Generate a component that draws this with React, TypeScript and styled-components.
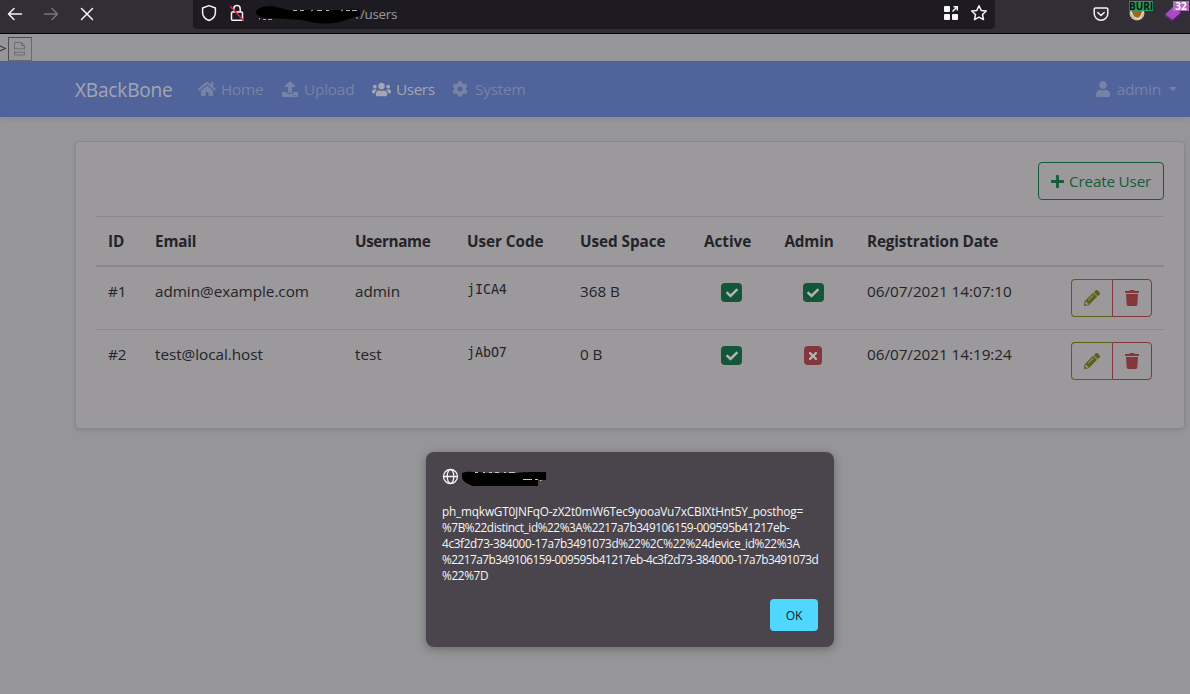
import React from 'react';
import styled, { createGlobalStyle } from 'styled-components';
import { FaHome, FaUpload, FaUsers, FaCog, FaUser, FaPlus, FaPencilAlt, FaTrash, FaCheck, FaTimes } from 'react-icons/fa';

const GlobalStyle = createGlobalStyle`
  * { box-sizing: border-box; }
  body {
    margin: 0;
    background: #969698;
    color: #242428;
    font-family: "Open Sans", "Noto Sans", sans-serif;
    font-size: 15.3px;
    line-height: 24px;
    overflow: hidden;
  }
  svg { display: block; flex: none; }
`;

const Page = styled.div`
  position: relative;
  width: 1190px;
  height: 694px;
  overflow: hidden;
  display: flex;
  flex-direction: column;
`;

const Toolbar = styled.header`
  height: 34px;
  flex: none;
  display: flex;
  align-items: flex-start;
  background: #322e35;
  border-bottom: 1px solid #050506;
`;

const NavButtons = styled.div`
  width: 193px;
  height: 27px;
  padding-left: 7px;
  display: flex;
  align-items: center;
  gap: 20px;
`;

const AddressBar = styled.div`
  width: 802px;
  height: 29px;
  padding: 0 7px 3px 8px;
  display: flex;
  align-items: center;
  background: #1d1b21;
  border-radius: 0 0 4px 4px;
`;

const UrlPath = styled.span`
  color: #9b9a9f;
  font-size: 13.4px;
  line-height: 20px;
  letter-spacing: -0.3px;
  padding-top: 1px;
  margin-right: auto;
`;

const Extensions = styled.div`
  height: 27px;
  padding-left: 98px;
  display: flex;
  align-items: center;
`;

const Extension = styled.div<{ $gap: number }>`
  position: relative;
  margin-left: ${p => p.$gap}px;
`;

const ExtensionBadge = styled.span<{ $bg: string; $ink: string; $left: number; $width: number }>`
  position: absolute;
  left: ${p => p.$left}px;
  top: -5px;
  width: ${p => p.$width}px;
  height: 10px;
  display: flex;
  align-items: center;
  justify-content: center;
  white-space: nowrap;
  background: ${p => p.$bg};
  color: ${p => p.$ink};
  font: 700 10px/10px "Open Sans", sans-serif;
`;

const InjectedStrip = styled.div`
  height: 27px;
  flex: none;
  display: flex;
  align-items: flex-start;
  padding-top: 3px;
`;

const StrayText = styled.span`
  width: 9px;
  margin-left: -1px;
  font-size: 13px;
  line-height: 22px;
`;

const BrokenImage = styled.div`
  width: 24px;
  height: 24px;
  border: 1px solid;
  border-color: #4d4d51 #6b6b6f #6b6b6f #4d4d51;
  display: grid;
  place-items: center;
`;

const Navbar = styled.nav`
  height: 56px;
  flex: none;
  padding: 0 13px 0 75px;
  display: flex;
  align-items: center;
  background: #50639b;
  box-shadow: 0 2px 4px rgba(0, 0, 0, 0.07);
`;

const Brand = styled.span`
  width: 123px;
  padding-top: 1px;
  font-size: 19.1px;
  letter-spacing: -0.2px;
  color: #a4a6b1;
`;

const NavLink = styled.a<{ $active?: boolean; $width?: number; $gap?: number }>`
  width: ${p => (p.$width ? `${p.$width}px` : 'auto')};
  display: flex;
  align-items: center;
  gap: ${p => p.$gap ?? 5}px;
  white-space: nowrap;
  letter-spacing: ${p => (p.$active ? -0.4 : -0.18)}px;
  color: ${p => (p.$active ? '#a4a6b1' : '#7682a6')};
`;

const Account = styled(NavLink)`
  margin-left: auto;
  gap: 6px;
`;

const Caret = styled.i`
  margin-left: 2px;
  border: 4px solid transparent;
  border-top-color: currentColor;
  border-bottom: 0;
`;

const Card = styled.main`
  width: 1110px;
  height: 288px;
  margin: 24px 0 0 75px;
  padding: 20px;
  border: 1px solid #88878a;
  border-radius: 4px;
  background: #9b999c;
  box-shadow: 0 2px 4px rgba(0, 0, 0, 0.09);
`;

const CardActions = styled.div`
  display: flex;
  justify-content: flex-end;
  margin-bottom: 16px;
`;

const CreateButton = styled.button`
  width: 126px;
  height: 38px;
  padding: 0 0 0 11px;
  display: flex;
  align-items: center;
  gap: 4px;
  border: 1px solid #165b3c;
  border-radius: 4px;
  background: none;
  color: #165b3c;
  font: inherit;
  letter-spacing: -0.2px;
  white-space: nowrap;
`;

const Row = styled.div<{ $head?: boolean }>`
  display: grid;
  grid-template-columns: 47px 200px 112px 113px 124px 79px 84px 204px 105px;
  height: ${p => (p.$head ? 50 : 63)}px;
  border-top: 1px solid #88868a;
  letter-spacing: -0.05px;
  ${p => p.$head && 'border-bottom: 1px solid #88868a; font-weight: 700; letter-spacing: -0.16px;'}
`;

const Cell = styled.div<{ $track?: number }>`
  padding: 12px 0 0 12px;
  white-space: nowrap;
  ${p => p.$track !== undefined && `letter-spacing: ${p.$track}px;`}
`;

const Code = styled.code`
  display: block;
  margin-top: -1px;
  font: 13.4px/24px "DejaVu Sans Mono", monospace;
  letter-spacing: -0.1px;
`;

const BadgeCell = styled.div`
  display: flex;
  justify-content: center;
  padding-top: 16px;
`;

const Badge = styled.span<{ $on: boolean }>`
  width: ${p => (p.$on ? 21 : 18)}px;
  height: 19px;
  display: grid;
  place-items: center;
  border-radius: 4px;
  color: #b5b5b5;
  background: ${p => (p.$on ? '#135738' : '#84373a')};
`;

const ButtonGroup = styled.div`
  display: flex;
  padding: 12px;
`;

const IconButton = styled.button<{ $danger?: boolean }>`
  width: ${p => (p.$danger ? 40 : 41)}px;
  height: 38px;
  padding: 0;
  display: grid;
  place-items: center;
  background: none;
  border: 1px solid ${p => (p.$danger ? '#84373a' : '#5b6218')};
  border-right-width: ${p => (p.$danger ? 1 : 0)}px;
  border-radius: ${p => (p.$danger ? '0 4px 4px 0' : '4px 0 0 4px')};
  color: ${p => (p.$danger ? '#84373a' : '#5b6218')};
`;

const Dialog = styled.section`
  position: absolute;
  left: 426px;
  top: 452px;
  width: 408px;
  height: 195px;
  padding: 16px;
  display: flex;
  flex-direction: column;
  border-radius: 8px;
  background: #4a454c;
  color: #f6f6f7;
  box-shadow: 0 2px 10px rgba(0, 0, 0, 0.3);
`;

const DialogOrigin = styled.div`
  display: flex;
  align-items: center;
  height: 17px;
  gap: 2px;
`;

const DialogText = styled.p`
  margin: 18px 0 0;
  font-size: 11.8px;
  line-height: 16px;
`;

const Line = styled.span<{ $track: number }>`
  display: block;
  white-space: nowrap;
  letter-spacing: ${p => p.$track}px;
`;

const OkButton = styled.button`
  width: 48px;
  height: 32px;
  margin: auto 0 0 auto;
  padding: 1px 0 0;
  border: 0;
  border-radius: 4px;
  background: #50d7ff;
  color: #17202a;
  font: 12px/16px "Open Sans", sans-serif;
`;

const users = [
  { id: '#1', email: 'admin@example.com', name: 'admin', code: 'jICA4', space: '368 B', active: true, admin: true, date: '06/07/2021 14:07:10' },
  { id: '#2', email: 'test@local.host', name: 'test', code: 'jAbO7', space: '0 B', active: true, admin: false, date: '06/07/2021 14:19:24' },
];

const headings: [string, number?][] = [
  ['ID'], ['Email'], ['Username', -0.4], ['User Code', -0.05], ['Used Space', -0.05], ['Active', -0.05], ['\u200aAdmin', -0.15], ['Registration Date'], [''],
];

const message: [string, number][] = [
  ['ph_mqkwGT0JNFqO-zX2t0mW6Tec9yooaVu7xCBIXtHnt5Y_posthog=', -0.18],
  ['%7B%22distinct_id%22%3A%2217a7b349106159-009595b41217eb-', -0.42],
  ['4c3f2d73-384000-17a7b3491073d%22%2C%22%24device_id%22%3A', -0.37],
  ['%2217a7b349106159-009595b41217eb-4c3f2d73-384000-17a7b3491073d', -0.51],
  ['%22%7D', -0.35],
];

const line = { fill: 'none', stroke: '#f4f4f6', strokeWidth: 1.5, strokeLinecap: 'round', strokeLinejoin: 'round' } as const;

const StatusBadge = ({ on }: { on: boolean }) => (
  <BadgeCell><Badge $on={on}>{on ? <FaCheck size={12} /> : <FaTimes size={12} />}</Badge></BadgeCell>
);

export default function App() {
  return (
    <Page>
      <GlobalStyle />
      <Toolbar>
        <NavButtons>
          <svg width="16" height="16" viewBox="0 0 16 16" {...line}><path d="M14.5 8H1.5M7 2.5 1.5 8 7 13.5" /></svg>
          <svg width="16" height="16" viewBox="0 0 16 16" {...line} stroke="#77747a"><path d="M1.5 8h13M9 2.5 14.5 8 9 13.5" /></svg>
          <svg width="16" height="16" viewBox="0 0 16 16" {...line}><path d="m2.500 2.500 11 11M13.500 2.500l-11 11" /></svg>
        </NavButtons>
        <AddressBar>
          <svg width="16" height="18" viewBox="0 0 16 18" {...line}><path d="M8 1.6 14.4 4v4.5c0 3.700-2.500 6.500-6.400 8-3.900-1.500-6.400-4.300-6.400-8V4Z" /></svg>
          <svg width="28" height="18" viewBox="-12 0 28 18" {...line}>
            <path d="M3.500 8h9a1 1 0 0 1 1 1v6.200a1 1 0 0 1-1 1h-9a1 1 0 0 1-1-1V9a1 1 0 0 1 1-1ZM4.800 8V4.800a3.200 3.200 0 0 1 6.400 0V8" />
            <path d="m1.500 2.500 13 14" stroke="#d8274b" />
          </svg>
          <svg width="115" height="24" viewBox="245 1 115 24">
            <path d="M259.500 18v1.500M263 19.500h3M268 19.500h4" stroke="#a8a8aa" />
            <path d="M256 12c0-3 7-6 14-6 6 0 12 3 19 4h54c9-1 17-1 20 1v4c-8 2-14 4-20 6-13 4-29 3-40-1-13-1-20-1-31-2-8 1-16-2-16-6Z" fill="#000" />
            <path d="M293 10.500h4M300 10.500h4M311 11l2-1M317 10.500h5M326 10.500h3M341 11l2-1M346 10.500h4M352 10.500h5M357 17v2" stroke="#b4b4b6" />
          </svg>
          <UrlPath>/users</UrlPath>
          <svg width="16" height="16" viewBox="0 0 16 16" fill="#f8f8fa">
            <rect x="1" y="1" width="6" height="6" rx="1" /><rect x="1" y="9" width="6" height="6" rx="1" /><rect x="9" y="9" width="6" height="6" rx="1" />
            <path d="M9.500 6.500 14 2M10.500 1.700h3.800v3.800" fill="none" stroke="#f8f8fa" strokeWidth="1.500" />
          </svg>
          <svg width="29" height="18" viewBox="-11 0 29 18" {...line}><path d="m9 1.700 2.200 4.700 5.100.6-3.800 3.500 1 5.100L9 13.100l-4.500 2.500 1-5.100L1.700 7l5.100-.6Z" /></svg>
        </AddressBar>
        <Extensions>
          <Extension $gap={0}>
            <svg width="16" height="16" viewBox="0 0 16 16" {...line}><path d="M2.500 2h11a1.300 1.300 0 0 1 1.300 1.300V7.500a6.800 6.800 0 0 1-13.600 0V3.300A1.300 1.300 0 0 1 2.500 2ZM4.800 6.500 8 9.500l3.200-3" /></svg>
          </Extension>
          <Extension $gap={20}>
            <svg width="16" height="16" viewBox="0 0 16 16"><circle cx="8" cy="7" r="7.500" fill="#c8bda0" /><path d="M3 5h10l-1 5-4 2-4-1Z" fill="#9a6a18" /><path d="m2 6 3 5 5 2 4-7" fill="none" stroke="#eee7d4" /></svg>
            <ExtensionBadge $bg="#329761" $ink="#07150d" $left={0} $width={24}>BURI</ExtensionBadge>
          </Extension>
          <Extension $gap={20}>
            <svg width="16" height="16" viewBox="0 0 16 16"><path d="m0 8.500 8-7.500 8 5.500-8 7.500Z" fill="#a94ac4" /><path d="m0 8.500 8 5v2l-8-5Z" fill="#6f2b8d" /><path d="m8 13.500 8-7v2l-8 7Z" fill="#56206f" /></svg>
            <ExtensionBadge $bg="#b468c4" $ink="#fff" $left={8} $width={16}>32</ExtensionBadge>
          </Extension>
        </Extensions>
      </Toolbar>
      <InjectedStrip>
        <StrayText>&gt;</StrayText>
        <BrokenImage>
          <svg width="14" height="14" viewBox="0 0 14 14" fill="none" stroke="#6c6c70"><path d="M1.500 7V.5h7l3 3V7M8.500.5v3h3M1.500 7l2-1 1.500 1.500L6.500 6 8 7.500 9.500 6l2 1M1.500 9.500v3.500h10V9.500L9.500 11 8 9.500 6.500 11 5 9.500 3.500 11Z" /></svg>
        </BrokenImage>
      </InjectedStrip>
      <Navbar>
        <Brand>XBackBone</Brand>
        <NavLink $width={84}><FaHome size={18} />Home</NavLink>
        <NavLink $width={90} $gap={6}><FaUpload size={16} />Upload</NavLink>
        <NavLink $width={80} $active><FaUsers size={19} />Users</NavLink>
        <NavLink $gap={7}><FaCog size={16} />System</NavLink>
        <Account><FaUser size={16} />admin<Caret /></Account>
      </Navbar>
      <Card>
        <CardActions><CreateButton><FaPlus size={15} />Create User</CreateButton></CardActions>
        <Row $head>{headings.map(([label, track]) => <Cell key={label} $track={track}>{label}</Cell>)}</Row>
        {users.map(u => (
          <Row key={u.id}>
            <Cell>{u.id}</Cell>
            <Cell>{u.email}</Cell>
            <Cell>{u.name}</Cell>
            <Cell><Code>{u.code}</Code></Cell>
            <Cell>{u.space}</Cell>
            <StatusBadge on={u.active} />
            <StatusBadge on={u.admin} />
            <Cell>{u.date}</Cell>
            <ButtonGroup>
              <IconButton><FaPencilAlt size={16} /></IconButton>
              <IconButton $danger><FaTrash size={16} /></IconButton>
            </ButtonGroup>
          </Row>
        ))}
      </Card>
      <Dialog>
        <DialogOrigin>
          <svg width="17" height="17" viewBox="0 0 17 17" {...line} strokeWidth="1.300"><circle cx="8.500" cy="8.500" r="7" /><ellipse cx="8.500" cy="8.500" rx="3.300" ry="7" /><path d="M1.500 8.500h14" /></svg>
          <svg width="86" height="18" viewBox="0 -2 86 18">
            <path d="M1 3c5-2 10-1 16-1l8 1h30c6-1 12-1 30-1v8h-8v6c-9 1-16 0-24 0-14 1-28 1-41 0-6-2-11-5-11-9Z" fill="#000" />
            <path d="M14 2.500h3M22 2.500h2M28 2.500h3M34 2.500h4M43 2.500h2M48 2.500h6M62 9.500h9M74 9.500h3M79 10.500h1.500" stroke="#c4c4c6" />
          </svg>
        </DialogOrigin>
        <DialogText>{message.map(([text, track]) => <Line key={text} $track={track}>{text}</Line>)}</DialogText>
        <OkButton>OK</OkButton>
      </Dialog>
    </Page>
  );
}
